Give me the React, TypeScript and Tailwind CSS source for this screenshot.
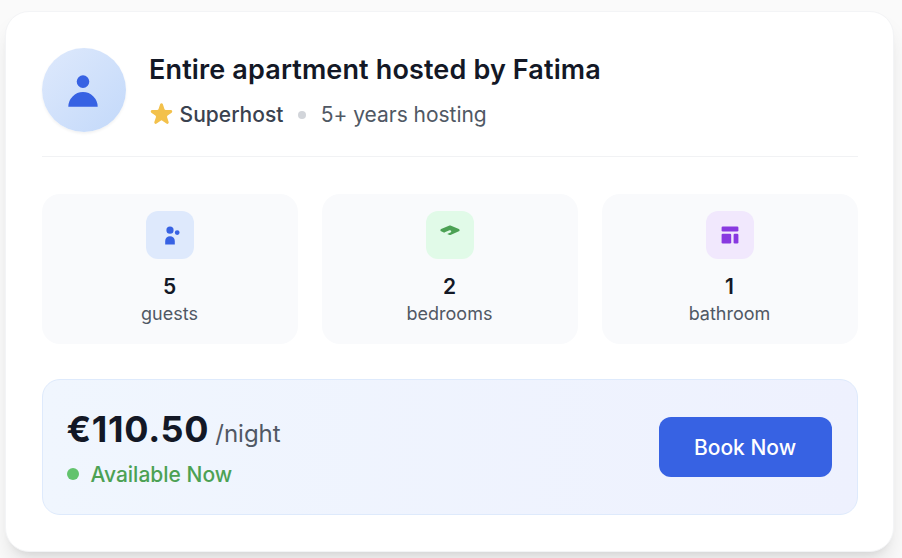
import React from "react";

type Stat = { value: string; label: string; tile: string; paths: string[] };

const stats: Stat[] = [
  {
    value: "5",
    label: "guests",
    tile: "bg-[#dee9fc] text-[#3762e3]",
    paths: ["M13 6a3 3 0 11-6 0 3 3 0 016 0zM18 8a2 2 0 11-4 0 2 2 0 014 0zM14 15a4 4 0 00-8 0v3h8v-3z"],
  },
  {
    value: "2",
    label: "bedrooms",
    tile: "bg-[#e1fae8] text-[#4ca154]",
    paths: [
      "M10.394 2.08a1 1 0 00-.788 0l-7 3a1 1 0 000 1.84L5.25 8.051a.999.999 0 01.356-.257l4-1.714a1 1 0 11.788 1.838L7.667 9.088l1.94.831a1 1 0 00.787 0l7-3a1 1 0 000-1.838l-7-3z",
    ],
  },
  {
    value: "1",
    label: "bathroom",
    tile: "bg-[#f1e8fd] text-[#8839e0]",
    paths: [
      "M3 4a1 1 0 011-1h12a1 1 0 011 1v2a1 1 0 01-1 1H4a1 1 0 01-1-1V4z",
      "M3 10a1 1 0 011-1h6a1 1 0 011 1v6a1 1 0 01-1 1H4a1 1 0 01-1-1v-6z",
      "M14 9a1 1 0 00-1 1v6a1 1 0 001 1h2a1 1 0 001-1v-6a1 1 0 00-1-1h-2z",
    ],
  },
];

function Icon({ paths, className }: { paths: string[]; className: string }) {
  return (
    <svg viewBox="0 0 20 20" fill="currentColor" className={className} aria-hidden="true">
      {paths.map((d) => (
        <path key={d} d={d} />
      ))}
    </svg>
  );
}

function Header() {
  return (
    <header className="flex h-[109px] items-start border-b border-[#f1f2f4]">
      <div className="mr-[23.5px] flex size-[84px] shrink-0 items-center justify-center rounded-full bg-linear-to-br from-[#dee9fc] to-[#c3d9fa] text-[#3762e3] shadow-[0_1.5px_3px_rgba(0,0,0,0.06)]">
        <Icon className="mr-px size-[42px]" paths={["M10 9a3 3 0 100-6 3 3 0 000 6zm-7 9a7 7 0 1114 0H3z"]} />
      </div>
      <div className="pt-[3px]">
        <h1 className="text-[27px] leading-[37px] font-semibold tracking-[0.14px] text-[#131826]">
          Entire apartment hosted by Fatima
        </h1>
        <div className="mt-3 flex items-center text-[21px] leading-[30px]">
          <Icon
            className="mr-1 -mt-0.5 -ml-[2.4px] size-[29px] text-[#f3c14b]"
            paths={[
              "M9.049 2.927c.3-.921 1.603-.921 1.902 0l1.07 3.292a1 1 0 00.95.69h3.462c.969 0 1.371 1.24.588 1.81l-2.8 2.034a1 1 0 00-.364 1.118l1.07 3.292c.3.921-.755 1.688-1.54 1.118l-2.8-2.034a1 1 0 00-1.175 0l-2.8 2.034c-.784.57-1.838-.197-1.539-1.118l1.07-3.292a1 1 0 00-.364-1.118L2.98 8.72c-.783-.57-.38-1.81.588-1.81h3.461a1 1 0 00.951-.69l1.07-3.292z",
            ]}
          />
          <span className="font-medium text-[#3a4250]">Superhost</span>
          <span className="mr-[15px] ml-[14.4px] size-2 rounded-full bg-[#d2d5da]" />
          <span className="tracking-[-0.03px] text-[#505864]">5+ years hosting</span>
        </div>
      </div>
    </header>
  );
}

export default function App() {
  return (
    <main className="h-[558px] overflow-hidden bg-[#fafafa] pt-[11px] pl-[5px] font-['Inter',sans-serif]">
      <section className="h-[541px] w-[889px] rounded-3xl border border-[#f3f4f6] bg-white pt-9 pl-[35.5px] shadow-[0_15px_22.5px_-4.5px_rgba(0,0,0,0.1),0_6px_9px_-6px_rgba(0,0,0,0.1)]">
        <div className="w-[816px]">
          <Header />
          <div className="mt-[37px] grid grid-cols-3 gap-6">
            {stats.map((s) => (
              <div key={s.label} className="flex h-[150px] flex-col items-center rounded-[18px] bg-[#f9fafc] pt-[17.4px]">
                <div className={`flex size-12 items-center justify-center rounded-xl ${s.tile}`}>
                  <Icon className="size-6" paths={s.paths} />
                </div>
                <div className="mt-[13px] text-[21px] leading-[30px] font-semibold text-[#131826]">{s.value}</div>
                <div className="text-[18px] leading-6 text-[#505864]">{s.label}</div>
              </div>
            ))}
          </div>
          <div className="mt-[35px] flex h-[136px] items-center justify-between rounded-[18px] border border-[#deeafc] bg-linear-to-r from-[#f0f6fe] to-[#eef1fe] pr-[25px] pl-6">
            <div>
              <div className="flex items-baseline gap-1.5 leading-[48px] text-[#505864]">
                <span className="text-[36px] font-bold tracking-[0.68px] text-[#131826]">€110.50</span>
                <span className="text-[24px]">/night</span>
              </div>
              <div className="mt-0.5 flex items-center gap-3 text-[21px] leading-[30px] font-medium text-[#4ca154]">
                <span className="-mt-0.5 size-3 rounded-full bg-[#62c36d]" />
                <span>Available Now</span>
              </div>
            </div>
            <button type="button" className="h-[60px] w-[173px] rounded-xl bg-[#3762e3] pt-px text-[21px] font-medium text-white">
              Book Now
            </button>
          </div>
        </div>
      </section>
    </main>
  );
}
